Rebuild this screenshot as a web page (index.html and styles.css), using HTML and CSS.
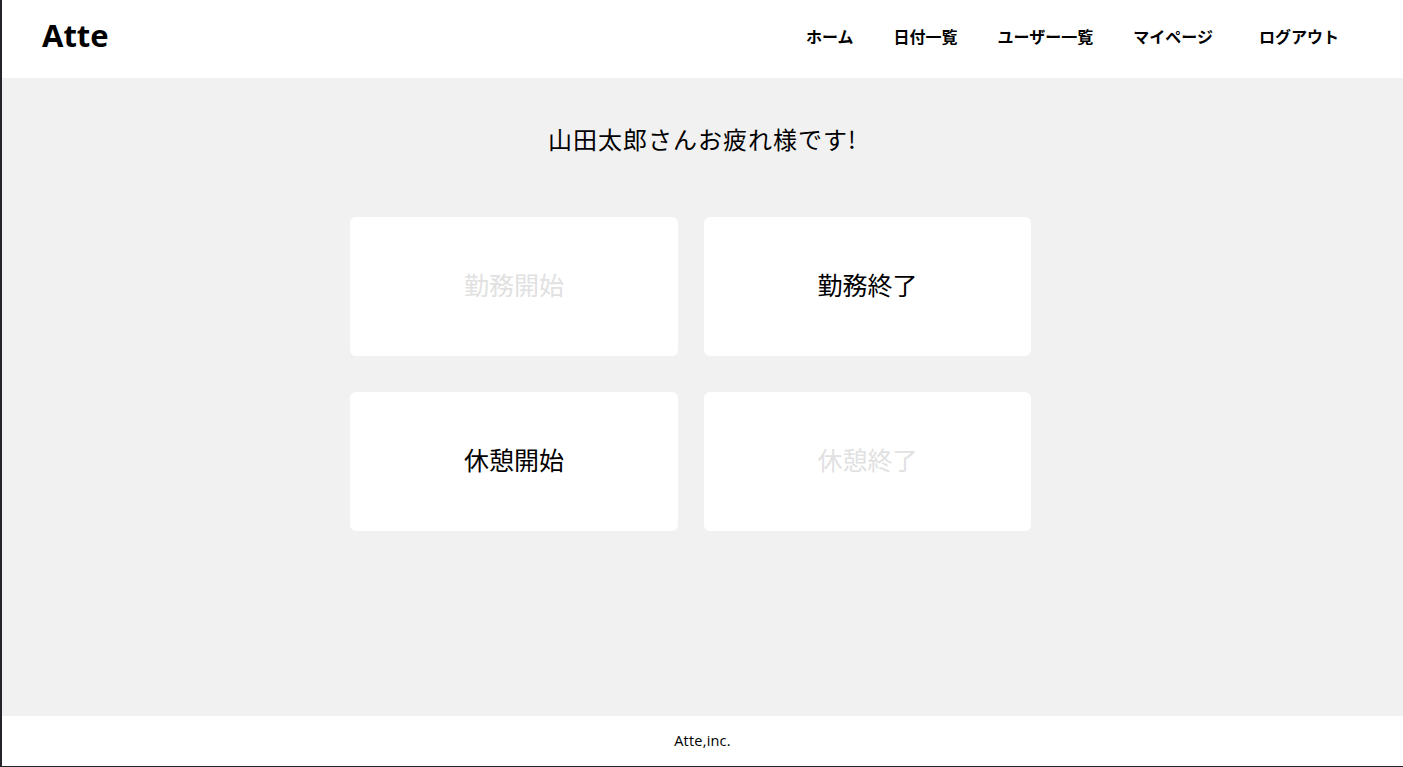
FILE: index.html
```html
<!DOCTYPE html>
<html lang="ja">
<head>
<meta charset="utf-8">
<title>Atte</title>
<link rel="stylesheet" href="styles.css">
</head>
<body>
<div class="frame">
  <header class="header">
    <h1 class="logo">Atte</h1>
    <nav class="nav">
      <a class="nav-link" href="#">ホーム</a>
      <a class="nav-link" href="#">日付一覧</a>
      <a class="nav-link" href="#">ユーザー一覧</a>
      <a class="nav-link" href="#">マイページ</a>
      <a class="nav-link nav-logout" href="#">ログアウト</a>
    </nav>
  </header>
  <main class="main">
    <p class="greeting">山田太郎さんお疲れ様です!</p>
    <div class="stamp-grid">
      <button class="stamp disabled">勤務開始</button>
      <button class="stamp">勤務終了</button>
      <button class="stamp">休憩開始</button>
      <button class="stamp disabled">休憩終了</button>
    </div>
  </main>
  <footer class="footer">
    <small class="copy">Atte,inc.</small>
  </footer>
</div>
</body>
</html>
```

FILE: styles.css
```css
* { box-sizing: border-box; }
html, body { margin: 0; padding: 0; }
body {
  font-family: "Noto Sans CJK JP", "Noto Sans", sans-serif;
  color: #000;
  background: #fff;
}
.frame {
  height: 767px;
  border-left: 2px solid #24242b;
  border-bottom: 1px solid #24242b;
  display: flex;
  flex-direction: column;
}
.header {
  height: 78px;
  background: #fff;
  display: flex;
  align-items: center;
  justify-content: space-between;
  padding: 0 64px 0 40px;
}
.logo {
  margin: 0;
  font-family: "Open Sans", sans-serif;
  font-size: 31px;
  font-weight: 700;
  line-height: 1;
  padding-bottom: 8px;
}
.nav {
  display: flex;
  align-items: center;
  gap: 40px;
  padding-bottom: 6px;
}
.nav-link {
  color: #000;
  text-decoration: none;
  font-size: 16px;
  font-weight: 700;
}
.nav-logout { margin-left: 6px; }
.main {
  flex: 1;
  background: #f1f1f1;
  display: flex;
  flex-direction: column;
  align-items: center;
}
.greeting {
  margin: 41px 0 0;
  font-size: 24px;
  line-height: 40px;
  letter-spacing: 1px;
  font-weight: 400;
}
.stamp-grid {
  margin: 58px 24px 0 0;
  display: grid;
  grid-template-columns: 328px 327px;
  column-gap: 26px;
  row-gap: 36px;
}
.stamp {
  height: 139px;
  border: none;
  border-radius: 6px;
  background: #fff;
  font-family: "Noto Sans CJK JP", sans-serif;
  font-size: 25px;
  color: #000;
  padding: 0 0 6px;
  cursor: pointer;
}
.stamp.disabled { color: #e1e1e1; }
.footer {
  height: 50px;
  background: #fff;
  display: flex;
  align-items: center;
  justify-content: center;
}
.copy {
  font-family: "Open Sans", sans-serif;
  font-size: 14.5px;
  letter-spacing: 0.2px;
  padding-bottom: 2px;
}
```
